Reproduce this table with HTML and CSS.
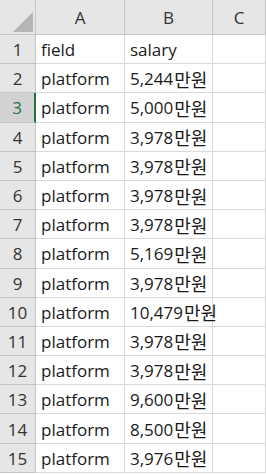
FILE: index.html
```html
<!DOCTYPE html>
<html lang="ko">
<head>
<meta charset="utf-8">
<link rel="stylesheet" href="styles.css">
</head>
<body>
<div class="sheet">
  <div class="corner"><span class="tri"></span></div>
  <div class="colhead">A</div>
  <div class="colhead">B</div>
  <div class="colhead">C</div>

  <div class="rowhead">1</div><div class="cell">field</div><div class="cell">salary</div><div class="cell"></div>
  <div class="rowhead">2</div><div class="cell">platform</div><div class="cell">5,244<span class="unit">만원</span></div><div class="cell"></div>
  <div class="rowhead active">3</div><div class="cell">platform</div><div class="cell">5,000<span class="unit">만원</span></div><div class="cell"></div>
  <div class="rowhead">4</div><div class="cell">platform</div><div class="cell">3,978<span class="unit">만원</span></div><div class="cell"></div>
  <div class="rowhead">5</div><div class="cell">platform</div><div class="cell">3,978<span class="unit">만원</span></div><div class="cell"></div>
  <div class="rowhead">6</div><div class="cell">platform</div><div class="cell">3,978<span class="unit">만원</span></div><div class="cell"></div>
  <div class="rowhead">7</div><div class="cell">platform</div><div class="cell">3,978<span class="unit">만원</span></div><div class="cell"></div>
  <div class="rowhead">8</div><div class="cell">platform</div><div class="cell">5,169<span class="unit">만원</span></div><div class="cell"></div>
  <div class="rowhead">9</div><div class="cell">platform</div><div class="cell">3,978<span class="unit">만원</span></div><div class="cell"></div>
  <div class="rowhead">10</div><div class="cell">platform</div><div class="cell">10,479<span class="unit">만원</span></div><div class="cell"></div>
  <div class="rowhead">11</div><div class="cell">platform</div><div class="cell">3,978<span class="unit">만원</span></div><div class="cell"></div>
  <div class="rowhead">12</div><div class="cell">platform</div><div class="cell">3,978<span class="unit">만원</span></div><div class="cell"></div>
  <div class="rowhead">13</div><div class="cell">platform</div><div class="cell">9,600<span class="unit">만원</span></div><div class="cell"></div>
  <div class="rowhead">14</div><div class="cell">platform</div><div class="cell">8,500<span class="unit">만원</span></div><div class="cell"></div>
  <div class="rowhead">15</div><div class="cell">platform</div><div class="cell">3,976<span class="unit">만원</span></div><div class="cell"></div>
</div>
</body>
</html>
```
FILE: styles.css
```css
html, body {
  margin: 0;
  padding: 0;
  background: #ffffff;
  overflow: hidden;
}
.sheet {
  display: grid;
  grid-template-columns: 36px 89px 88px 1fr;
  grid-template-rows: 35px repeat(15, 29.2px);
  width: 266px;
  font-family: "Open Sans", "Noto Sans CJK KR", sans-serif;
  font-size: 17px;
  color: #1a1a1a;
}
.corner, .colhead, .rowhead {
  background: #e6e6e6;
  box-sizing: border-box;
  border-right: 1px solid #c6c6c6;
  border-bottom: 1px solid #c6c6c6;
}
.corner {
  position: relative;
}
.tri {
  position: absolute;
  right: 2px;
  bottom: 2px;
  width: 0;
  height: 0;
  border-style: solid;
  border-width: 0 0 20px 20px;
  border-color: transparent transparent #b5b5b5 transparent;
}
.colhead {
  display: flex;
  align-items: center;
  justify-content: center;
  color: #333333;
  padding-top: 1px;
}
.rowhead {
  display: flex;
  align-items: center;
  justify-content: center;
  color: #333333;
  padding-top: 1px;
}
.rowhead.active {
  background: #d2d2d2;
  color: #217346;
  border-right: 2px solid #217346;
}
.cell {
  box-sizing: border-box;
  border-right: 1px solid #d9d9d9;
  border-bottom: 1px solid #d9d9d9;
  display: flex;
  align-items: center;
  padding: 1px 0 0 5px;
  white-space: nowrap;
  overflow: visible;
}
.unit {
  font-size: 18px;
  margin-left: 1px;
}
```
